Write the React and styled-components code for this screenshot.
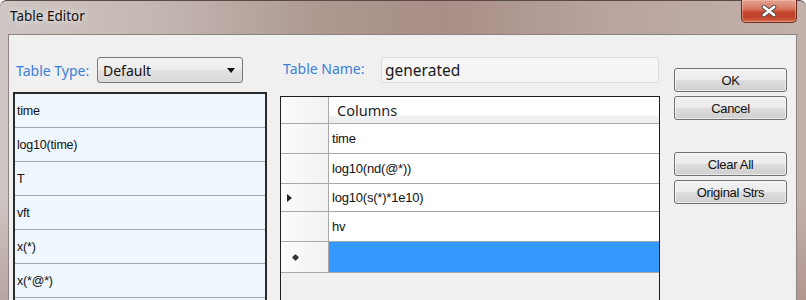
import React from "react";
import styled, { createGlobalStyle } from "styled-components";

const GlobalStyle = createGlobalStyle`
  html, body {
    margin: 0;
    padding: 0;
    overflow: hidden;
  }
`;

const Window = styled.div`
  width: 806px;
  height: 300px;
  display: flex;
  flex-direction: column;
  overflow: hidden;
  border-radius: 6px 6px 0 0;
  background: linear-gradient(
      to bottom,
      rgba(0, 0, 0, 0) 0%,
      rgba(0, 0, 0, 0) 65%,
      rgba(120, 70, 60, 0.25) 100%
    ),
    linear-gradient(
      to right,
      #cfc6c3 0%,
      #c3b6b2 20%,
      #ad9890 40%,
      #a88f87 55%,
      #b8a39d 75%,
      #c4b1ab 100%
    );
  box-shadow: inset 0 1px 0 #5a4a46;
`;

const TitleBar = styled.div`
  height: 34px;
  flex-shrink: 0;
  display: flex;
  justify-content: space-between;
  align-items: flex-start;
  padding: 0 9px 0 10px;
  box-sizing: border-box;
`;

const Title = styled.div`
  margin-top: 7px;
  font-family: "Noto Sans", "Open Sans", sans-serif;
  font-size: 13.5px;
  color: #111;
  text-shadow: 0 0 6px rgba(255, 255, 255, 0.8), 0 0 10px rgba(255, 255, 255, 0.6);
`;

const CloseButton = styled.div`
  width: 56px;
  height: 23px;
  box-sizing: border-box;
  display: flex;
  align-items: center;
  justify-content: center;
  border: 1px solid #6a2a1e;
  border-top: none;
  border-radius: 0 0 5px 5px;
  background: linear-gradient(
    to bottom,
    #e3a595 0%,
    #d77860 40%,
    #c5452b 55%,
    #c0432a 80%,
    #d8704f 100%
  );
  box-shadow: inset 0 0 0 1px rgba(255, 200, 180, 0.45);
`;

const Client = styled.div`
  flex: 1;
  margin: 0 9px 0 8px;
  border: 1px solid #8a8583;
  border-bottom: none;
  background: #f0f0f0;
  display: flex;
  align-items: flex-start;
  padding-left: 4px;
  overflow: hidden;
`;

const Column = styled.div`
  width: ${(p) => p.$width}px;
  margin-right: ${(p) => p.$gap || 0}px;
  padding-top: ${(p) => p.$top || 0}px;
  display: flex;
  flex-direction: column;
  flex-shrink: 0;
`;

const FieldRow = styled.div`
  height: 26px;
  margin-top: 22px;
  display: flex;
  align-items: center;
`;

const Label = styled.div`
  width: ${(p) => p.$width}px;
  box-sizing: border-box;
  padding-left: 3px;
  font-family: "Noto Sans", "Open Sans", sans-serif;
  font-size: 14px;
  color: #3b80d8;
  margin-top: ${(p) => p.$lift || 0}px;
`;

const Select = styled.div`
  width: 146px;
  height: 26px;
  box-sizing: border-box;
  border: 1px solid #7a7a7a;
  border-radius: 3px;
  background: linear-gradient(to bottom, #f4f4f4 0%, #ececec 50%, #e2e2e2 51%, #d9d9d9 100%);
  display: flex;
  align-items: center;
  justify-content: space-between;
  padding: 0 7px 0 5px;
  font-family: "Noto Sans", "Open Sans", sans-serif;
  font-size: 14px;
  color: #111;
`;

const Arrow = styled.span`
  width: 0;
  height: 0;
  border-left: 4px solid transparent;
  border-right: 4px solid transparent;
  border-top: 5px solid #111;
`;

const Input = styled.div`
  width: 278px;
  height: 26px;
  box-sizing: border-box;
  border: 1px solid #dedede;
  border-radius: 2px;
  background: #f5f5f5;
  display: flex;
  align-items: center;
  padding-left: 3px;
  font-family: "Noto Sans", "Open Sans", sans-serif;
  font-size: 15.5px;
  color: #1a1a1a;
`;

const ListBox = styled.div`
  margin-top: 9px;
  border: 2px solid #2a2a2a;
  border-bottom: none;
  background: #eef6fe;
  height: 240px;
`;

const ListItem = styled.div`
  height: 34px;
  box-sizing: border-box;
  border-bottom: 1px solid #a6a6a6;
  display: flex;
  align-items: center;
  padding-left: 2px;
  font-family: "Liberation Sans", Arial, sans-serif;
  font-size: 12.5px;
  letter-spacing: -0.2px;
  color: #111;
`;

const Grid = styled.div`
  margin-top: 13px;
  height: 240px;
  border: 1px solid #1e1e1e;
  border-bottom: none;
  background: #f0f0f0;
`;

const GridRow = styled.div`
  display: flex;
  height: ${(p) => p.$height}px;
  box-sizing: border-box;
  border-bottom: 1px solid #a8a8a8;
`;

const RowHeader = styled.div`
  width: 48px;
  flex-shrink: 0;
  box-sizing: border-box;
  border-right: 1px solid #a8a8a8;
  background: linear-gradient(to right, #fbfbfb 0%, #f2f2f2 100%);
  display: flex;
  align-items: center;
  padding-left: 6px;
`;

const HeaderCell = styled.div`
  flex: 1;
  background: linear-gradient(to bottom, #ffffff 0%, #ffffff 70%, #f1f2f3 72%, #eceef0 100%);
  display: flex;
  align-items: center;
  padding-left: 8px;
  font-family: "Noto Sans", "Open Sans", sans-serif;
  font-size: 14.5px;
  color: #1e1e1e;
`;

const Cell = styled.div`
  flex: 1;
  background: ${(p) => (p.$selected ? "#3399ff" : "#ffffff")};
  display: flex;
  align-items: center;
  padding-left: 3px;
  font-family: "Liberation Sans", Arial, sans-serif;
  font-size: 13px;
  letter-spacing: -0.2px;
  color: #111;
`;

const Pointer = styled.span`
  width: 0;
  height: 0;
  border-top: 4px solid transparent;
  border-bottom: 4px solid transparent;
  border-left: 5px solid #222;
`;

const NewMark = styled.span`
  margin-left: 6px;
  width: 5px;
  height: 5px;
  border-radius: 1px;
  background: #333;
  transform: rotate(45deg);
`;

const Button = styled.div`
  height: 24px;
  box-sizing: border-box;
  margin-top: ${(p) => p.$gap || 0}px;
  border: 1px solid #707070;
  border-radius: 3px;
  background: linear-gradient(to bottom, #f2f2f2 0%, #ebebeb 50%, #dddddd 51%, #cfcfcf 100%);
  box-shadow: inset 0 0 0 1px rgba(255, 255, 255, 0.6);
  display: flex;
  align-items: center;
  justify-content: center;
  font-family: "Liberation Sans", Arial, sans-serif;
  font-size: 13px;
  letter-spacing: -0.3px;
  color: #111;
`;

const listItems = ["time", "log10(time)", "T", "vft", "x(*)", "x(*@*)", ""];

const gridRows = [
  { text: "time", height: 30 },
  { text: "log10(nd(@*))", height: 30 },
  { text: "log10(s(*)*1e10)", height: 28, current: true },
  { text: "hv", height: 30 },
  { text: "", height: 31, isNew: true },
];

const CloseGlyph = () => (
  <svg width="16" height="12" viewBox="0 0 16 12">
    <path d="M3 2 L13 10 M13 2 L3 10" stroke="#4a4a4a" strokeWidth="4.6" strokeLinecap="round" />
    <path d="M3 2 L13 10 M13 2 L3 10" stroke="#ffffff" strokeWidth="2.8" strokeLinecap="round" />
  </svg>
);

export default function App() {
  return (
    <>
      <GlobalStyle />
      <Window>
        <TitleBar>
          <Title>Table Editor</Title>
          <CloseButton>
            <CloseGlyph />
          </CloseButton>
        </TitleBar>
        <Client>
          <Column $width={254} $gap={13}>
            <FieldRow>
              <Label $width={84}>Table Type:</Label>
              <Select>
                Default
                <Arrow />
              </Select>
            </FieldRow>
            <ListBox>
              {listItems.map((item, i) => (
                <ListItem key={i}>{item}</ListItem>
              ))}
            </ListBox>
          </Column>

          <Column $width={380} $gap={14}>
            <FieldRow>
              <Label $width={101} $lift={-3}>
                Table Name:
              </Label>
              <Input>generated</Input>
            </FieldRow>
            <Grid>
              <GridRow $height={27}>
                <RowHeader />
                <HeaderCell>Columns</HeaderCell>
              </GridRow>
              {gridRows.map((row, i) => (
                <GridRow key={i} $height={row.height}>
                  <RowHeader>
                    {row.current && <Pointer />}
                    {row.isNew && <NewMark />}
                  </RowHeader>
                  <Cell $selected={row.isNew}>{row.text}</Cell>
                </GridRow>
              ))}
            </Grid>
          </Column>

          <Column $width={113} $top={33}>
            <Button>OK</Button>
            <Button $gap={4}>Cancel</Button>
            <Button $gap={32}>Clear All</Button>
            <Button $gap={4}>Original Strs</Button>
          </Column>
        </Client>
      </Window>
    </>
  );
}
